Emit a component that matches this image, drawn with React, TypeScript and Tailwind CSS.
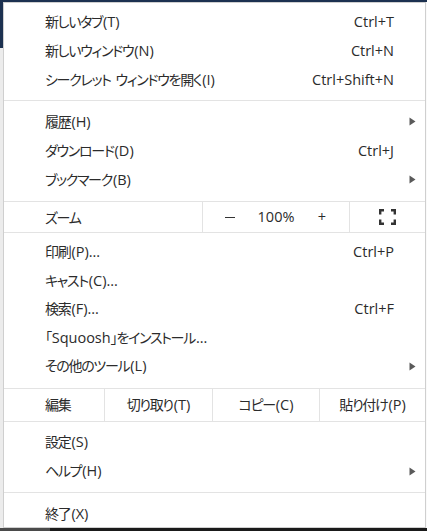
import React from "react";

const font = {
  fontFamily: '"Open Sans", "Noto Sans CJK JP", sans-serif',
};

function T({ s }: { s: string }) {
  const parts = s.split(/([\u3000-\u30ff\u4e00-\u9fff\uff00-\uffef]+)/);
  return (
    <>
      {parts.map((p, i) =>
        /[\u3000-\u30ff\u4e00-\u9fff\uff00-\uffef]/.test(p) ? (
          <span
            key={i}
            className="text-[14px] tracking-[-1.3px] pr-[1px] [font-family:'Noto_Sans_CJK_JP',sans-serif] [font-feature-settings:'palt']"
          >
            {p}
          </span>
        ) : (
          <span key={i}>{p}</span>
        )
      )}
    </>
  );
}

function Arrow() {
  return (
    <svg width="7" height="9" viewBox="0 0 7 9" className="block">
      <path d="M0.5 0.5 L6.5 4.5 L0.5 8.5 Z" fill="#5a5a5a" />
    </svg>
  );
}

function Item({
  label,
  shortcut,
  sub,
  h = "h-[29px]",
}: {
  label: string;
  shortcut?: string;
  sub?: boolean;
  h?: string;
}) {
  return (
    <div className={`flex items-center ${h} pl-[41px]`}>
      <span className="flex-1 whitespace-nowrap">
        <T s={label} />
      </span>
      {shortcut && <span className="whitespace-nowrap">{shortcut}</span>}
      <span className="w-[31px] flex justify-end pr-[9px]">{sub && <Arrow />}</span>
    </div>
  );
}

function FullscreenIcon() {
  return (
    <svg width="17" height="16" viewBox="0 0 17 16" fill="none" stroke="#333" strokeWidth="2.4">
      <path d="M1.2 5.5 V1.2 H5" />
      <path d="M12 1.2 H15.8 V5.5" />
      <path d="M15.8 10.5 V14.8 H12" />
      <path d="M5 14.8 H1.2 V10.5" />
    </svg>
  );
}

export default function App() {
  return (
    <div
      className="relative w-[427px] h-[531px] overflow-hidden bg-[#fafafa] text-[14.5px] text-[#2b2b2b]"
      style={font}
    >
      <div className="absolute left-0 top-0 w-full h-[2px] bg-[#1c3150]" />
      <div className="absolute left-0 top-0 w-[3px] h-[48px] bg-[#1c3150]" />
      <div className="absolute left-0 top-[48px] w-[3px] h-[480px] bg-[#ececec]" />
      <div className="absolute left-0 bottom-0 w-full h-[3px] bg-[#1a1a1a]" />
      <div className="absolute left-0 bottom-0 w-[50px] h-[3px] bg-[#4a4a4a]" />

      <div className="absolute left-[3px] top-[2px] w-[423px] h-[526px] bg-white border border-[#cfcfcf] pt-[4px]">
        <Item label="新しいタブ(T)" shortcut="Ctrl+T" />
        <Item label="新しいウィンドウ(N)" shortcut="Ctrl+N" />
        <Item label="シークレット ウィンドウを開く(I)" shortcut="Ctrl+Shift+N" />
        <div className="mt-[6px] mb-[6px] h-px bg-[#e3e3e3]" />
        <Item label="履歴(H)" sub />
        <Item label="ダウンロード(D)" shortcut="Ctrl+J" />
        <Item label="ブックマーク(B)" sub />

        <div className="mt-[7px] flex h-[32px] border-y border-[#e3e3e3]">
          <div className="w-[198px] flex items-center pl-[41px]">
            <T s="ズーム" />
          </div>
          <div className="w-[147px] flex items-center justify-center border-l border-[#e3e3e3]">
            <span className="w-[32px] flex justify-center">
              <span className="inline-block w-[10px] h-px bg-[#333]" />
            </span>
            <span className="w-[60px] text-center">100%</span>
            <span className="w-[32px] text-center">+</span>
          </div>
          <div className="flex-1 flex items-center justify-center border-l border-[#e3e3e3]">
            <FullscreenIcon />
          </div>
        </div>

        <div className="mt-[5px]">
          <Item label="印刷(P)..." shortcut="Ctrl+P" h="h-[28.5px]" />
          <Item label="キャスト(C)..." h="h-[28.5px]" />
          <Item label="検索(F)..." shortcut="Ctrl+F" h="h-[28.5px]" />
          <Item label="「Squoosh」をインストール..." h="h-[28.5px]" />
          <Item label="その他のツール(L)" sub h="h-[28.5px]" />
        </div>

        <div className="mt-[7px] flex h-[34px] border-y border-[#e3e3e3]">
          <div className="w-[100px] flex items-center pl-[41px]">
            <T s="編集" />
          </div>
          <div className="w-[108px] flex items-center justify-center border-l border-[#e3e3e3]">
            <T s="切り取り(T)" />
          </div>
          <div className="w-[107px] flex items-center justify-center border-l border-[#e3e3e3]">
            <T s="コピー(C)" />
          </div>
          <div className="flex-1 flex items-center justify-center border-l border-[#e3e3e3]">
            <T s="貼り付け(P)" />
          </div>
        </div>

        <div className="mt-[6px]">
          <Item label="設定(S)" />
          <Item label="ヘルプ(H)" sub />
        </div>
        <div className="mt-[6px] mb-[7px] h-px bg-[#e3e3e3]" />
        <Item label="終了(X)" />
      </div>
    </div>
  );
}
